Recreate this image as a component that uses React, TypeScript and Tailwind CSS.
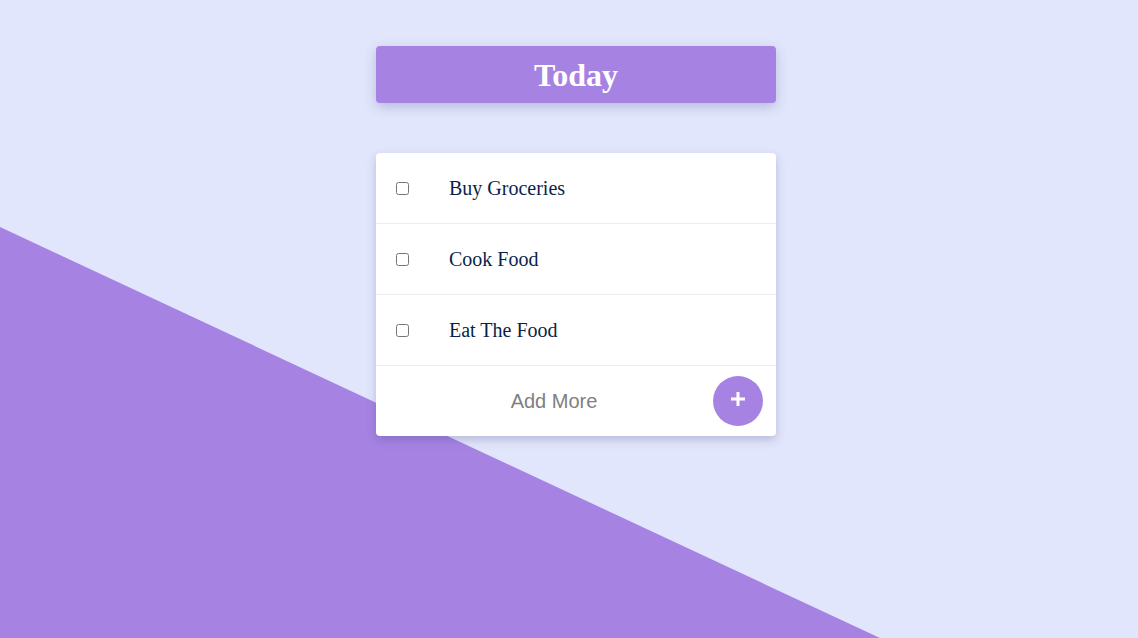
const tasks = ["Buy Groceries", "Cook Food", "Eat The Food"];

export default function App() {
  return (
    <div className="relative min-h-[638px] w-full overflow-hidden bg-[#e2e6fc]">
      {/* purple diagonal backdrop */}
      <div className="absolute inset-0 bg-[#a683e3] [clip-path:polygon(0_227px,880px_638px,0_638px)]" />

      <div className="relative flex flex-col items-center pl-[14px] pt-[46px]">
        <div className="flex h-[57px] w-[400px] items-center justify-center rounded-[4px] bg-[#a683e3] shadow-[0_4px_12px_rgba(60,60,120,0.25)]">
          <h1 className="font-['Liberation_Serif',serif] text-[32px] font-bold text-white">Today</h1>
        </div>

        <div className="mt-[50px] w-[400px] overflow-hidden rounded-[4px] bg-white shadow-[0_4px_10px_rgba(60,60,120,0.25)]">
          {tasks.map((t) => (
            <div key={t} className="flex h-[71px] items-center border-b border-[#ececec] pl-[20px]">
              <input type="checkbox" className="m-0 h-[13px] w-[13px]" />
              <span className="ml-[40px] font-['Liberation_Serif',serif] text-[20px] text-[#0a1f4a]">{t}</span>
            </div>
          ))}
          <div className="flex h-[70px] items-center pl-[19px] pr-[13px]">
            <span className="flex-1 text-center font-['Liberation_Sans',sans-serif] text-[20px] text-[#808080]">Add More</span>
            <button className="flex h-[50px] w-[50px] items-center justify-center rounded-full bg-[#a683e3]">
              <svg width="16" height="16" viewBox="0 0 16 16" className="-mt-[4px]">
                <path d="M8 1v14M1 8h14" stroke="white" strokeWidth="3" />
              </svg>
            </button>
          </div>
        </div>
      </div>
    </div>
  );
}
